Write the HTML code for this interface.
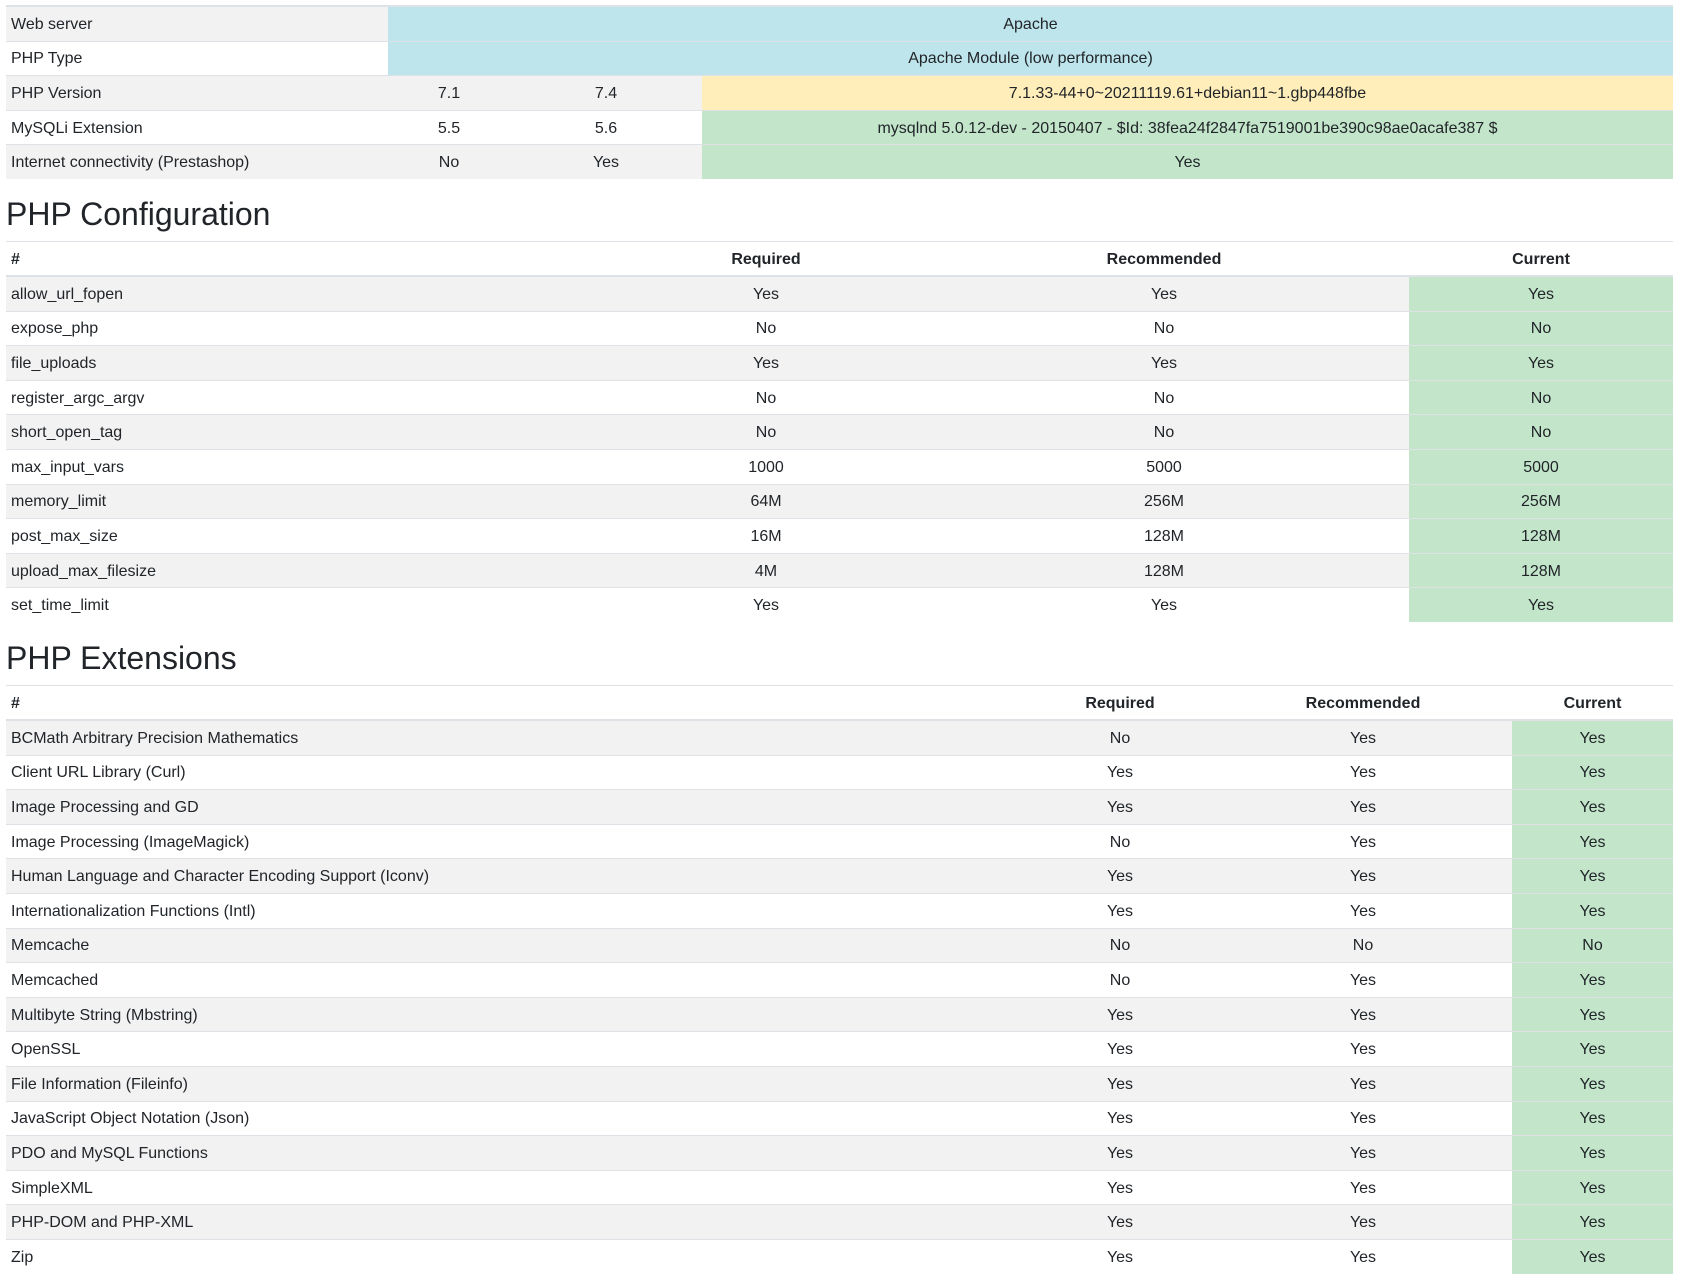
<!DOCTYPE html>
<html><head><meta charset="utf-8"><style>
body{margin:0;background:#fff;font-family:"Liberation Sans",Arial,sans-serif;font-size:16px;color:#212529;width:1681px;height:1286px;position:relative;overflow:hidden}
table{position:absolute;left:6px;width:1667px;border-collapse:collapse;table-layout:fixed}
td,th{height:31.6px;padding:2px 5px 0;border-top:1px solid #dee2e6;text-align:center;vertical-align:middle;line-height:20px}
td:first-child,th:first-child{text-align:left}
th{font-weight:bold;border-bottom:2px solid #dee2e6;height:31px}
tbody tr:nth-child(odd){background:#f2f2f2}
.i{background:#bee5eb}.w{background:#ffeeba}.s{background:#c3e6cb}
h2{position:absolute;left:6px;margin:0;font-weight:normal;font-size:32px;line-height:38px}
</style></head><body>
<table style="top:5px;border-top:2px solid #dee2e6">
<colgroup><col style="width:382px"><col style="width:122px"><col style="width:192px"><col></colgroup>
<tbody>
<tr><td>Web server</td><td colspan="3" class="i">Apache</td></tr>
<tr><td>PHP Type</td><td colspan="3" class="i">Apache Module (low performance)</td></tr>
<tr><td>PHP Version</td><td>7.1</td><td>7.4</td><td class="w">7.1.33-44+0~20211119.61+debian11~1.gbp448fbe</td></tr>
<tr><td>MySQLi Extension</td><td>5.5</td><td>5.6</td><td class="s">mysqlnd 5.0.12-dev - 20150407 - $Id: 38fea24f2847fa7519001be390c98ae0acafe387 $</td></tr>
<tr><td>Internet connectivity (Prestashop)</td><td>No</td><td>Yes</td><td class="s">Yes</td></tr>
</tbody></table>

<h2 style="top:195px">PHP Configuration</h2>
<table style="top:241px">
<colgroup><col style="width:607px"><col style="width:306px"><col style="width:490px"><col></colgroup>
<thead><tr><th>#</th><th>Required</th><th>Recommended</th><th>Current</th></tr></thead>
<tbody>
<tr><td>allow_url_fopen</td><td>Yes</td><td>Yes</td><td class="s">Yes</td></tr>
<tr><td>expose_php</td><td>No</td><td>No</td><td class="s">No</td></tr>
<tr><td>file_uploads</td><td>Yes</td><td>Yes</td><td class="s">Yes</td></tr>
<tr><td>register_argc_argv</td><td>No</td><td>No</td><td class="s">No</td></tr>
<tr><td>short_open_tag</td><td>No</td><td>No</td><td class="s">No</td></tr>
<tr><td>max_input_vars</td><td>1000</td><td>5000</td><td class="s">5000</td></tr>
<tr><td>memory_limit</td><td>64M</td><td>256M</td><td class="s">256M</td></tr>
<tr><td>post_max_size</td><td>16M</td><td>128M</td><td class="s">128M</td></tr>
<tr><td>upload_max_filesize</td><td>4M</td><td>128M</td><td class="s">128M</td></tr>
<tr><td>set_time_limit</td><td>Yes</td><td>Yes</td><td class="s">Yes</td></tr>
</tbody></table>

<h2 style="top:639px">PHP Extensions</h2>
<table style="top:685px">
<colgroup><col style="width:1020px"><col style="width:188px"><col style="width:298px"><col></colgroup>
<thead><tr><th>#</th><th>Required</th><th>Recommended</th><th>Current</th></tr></thead>
<tbody>
<tr><td>BCMath Arbitrary Precision Mathematics</td><td>No</td><td>Yes</td><td class="s">Yes</td></tr>
<tr><td>Client URL Library (Curl)</td><td>Yes</td><td>Yes</td><td class="s">Yes</td></tr>
<tr><td>Image Processing and GD</td><td>Yes</td><td>Yes</td><td class="s">Yes</td></tr>
<tr><td>Image Processing (ImageMagick)</td><td>No</td><td>Yes</td><td class="s">Yes</td></tr>
<tr><td>Human Language and Character Encoding Support (Iconv)</td><td>Yes</td><td>Yes</td><td class="s">Yes</td></tr>
<tr><td>Internationalization Functions (Intl)</td><td>Yes</td><td>Yes</td><td class="s">Yes</td></tr>
<tr><td>Memcache</td><td>No</td><td>No</td><td class="s">No</td></tr>
<tr><td>Memcached</td><td>No</td><td>Yes</td><td class="s">Yes</td></tr>
<tr><td>Multibyte String (Mbstring)</td><td>Yes</td><td>Yes</td><td class="s">Yes</td></tr>
<tr><td>OpenSSL</td><td>Yes</td><td>Yes</td><td class="s">Yes</td></tr>
<tr><td>File Information (Fileinfo)</td><td>Yes</td><td>Yes</td><td class="s">Yes</td></tr>
<tr><td>JavaScript Object Notation (Json)</td><td>Yes</td><td>Yes</td><td class="s">Yes</td></tr>
<tr><td>PDO and MySQL Functions</td><td>Yes</td><td>Yes</td><td class="s">Yes</td></tr>
<tr><td>SimpleXML</td><td>Yes</td><td>Yes</td><td class="s">Yes</td></tr>
<tr><td>PHP-DOM and PHP-XML</td><td>Yes</td><td>Yes</td><td class="s">Yes</td></tr>
<tr><td>Zip</td><td>Yes</td><td>Yes</td><td class="s">Yes</td></tr>
</tbody></table>
</body></html>
